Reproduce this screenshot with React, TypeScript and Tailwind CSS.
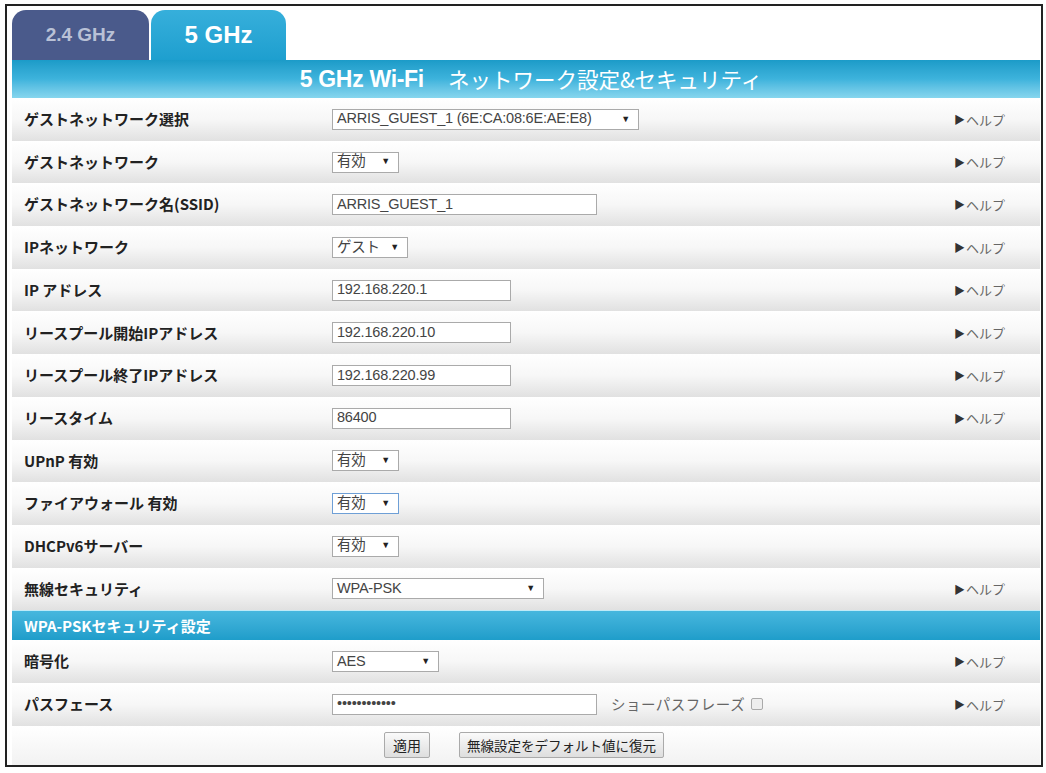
import { ReactNode } from 'react';

const jp = "font-['Noto_Sans_CJK_JP','Noto_Sans',sans-serif]";
const ctl = "font-['Liberation_Sans','Noto_Sans_CJK_JP',sans-serif]";

function Help() {
  return (
    <span className={`flex items-center text-[13px] text-[#666] ${jp}`}>
      <span className="text-[11px] text-[#333] mr-[1px]">▶</span>ヘルプ
    </span>
  );
}

function Select({ value, width, focused }: { value: string; width: number; focused?: boolean }) {
  return (
    <div
      className={`h-[21px] flex items-center justify-between bg-white border ${focused ? 'border-[#6e9fd6]' : 'border-[#aaa]'} pl-[4px] pr-[8px] text-[14.5px] text-[#444] ${ctl} tracking-[-0.2px]`}
      style={{ width }}
    >
      <span className="whitespace-nowrap">{value}</span>
      <span className="text-[9px] text-[#222]">▼</span>
    </div>
  );
}

function Input({ value, width }: { value: string; width: number }) {
  return (
    <div
      className={`h-[21px] flex items-center bg-white border border-[#aaa] px-[4px] text-[14.5px] text-[#444] ${ctl} tracking-[-0.2px]`}
      style={{ width }}
    >
      {value}
    </div>
  );
}

function Row({ label, control, help = true, extra }: { label: string; control: ReactNode; help?: boolean; extra?: ReactNode }) {
  return (
    <div className="h-[42.7px] flex items-center bg-gradient-to-b from-white via-[#f7f7f7] to-[#e1e1e1]">
      <div className={`w-[320px] pl-[12px] font-bold text-[15px] text-[#222] ${jp}`}>{label}</div>
      <div className="flex items-center">{control}</div>
      {extra}
      <div className="ml-auto w-[86px]">{help && <Help />}</div>
    </div>
  );
}

export default function App() {
  return (
    <div className="w-[1046px] h-[773px] bg-white pt-[4px] pl-[5px]">
      <div className="w-[1038px] h-[763px] border-2 border-[#222] pl-[5px] pr-[1px] pt-[4px] flex flex-col">
        {/* tabs */}
        <div className="flex items-end gap-[2px] h-[50px]">
          <div className="w-[137px] h-[50px] rounded-t-[14px] bg-[#4a5a8b] flex items-center justify-center">
            <span className={`text-[19px] font-bold text-[#b9c1d6] ${ctl}`}>2.4 GHz</span>
          </div>
          <div className="w-[135px] h-[50px] rounded-t-[14px] bg-gradient-to-b from-[#36afdb] to-[#1d9fcf] flex items-center justify-center">
            <span className={`text-[24px] font-bold text-white ${ctl}`}>5 GHz</span>
          </div>
        </div>
        {/* title bar */}
        <div className="h-[38px] bg-gradient-to-b from-[#1b9bc8] via-[#3db3dc] to-[#86d6ee] flex items-center justify-center text-white pl-[10px]">
          <span className={`text-[23px] font-bold ${ctl} tracking-[-0.3px]`}>5 GHz Wi-Fi</span>
          <span className={`text-[21.5px] ml-[24px] ${jp}`}>ネットワーク設定&セキュリティ</span>
        </div>

        <Row label="ゲストネットワーク選択" control={<Select value="ARRIS_GUEST_1 (6E:CA:08:6E:AE:E8)" width={307} />} />
        <Row label="ゲストネットワーク" control={<Select value="有効" width={67} />} />
        <Row label="ゲストネットワーク名(SSID)" control={<Input value="ARRIS_GUEST_1" width={265} />} />
        <Row label="IPネットワーク" control={<Select value="ゲスト" width={76} />} />
        <Row label="IP アドレス" control={<Input value="192.168.220.1" width={179} />} />
        <Row label="リースプール開始IPアドレス" control={<Input value="192.168.220.10" width={179} />} />
        <Row label="リースプール終了IPアドレス" control={<Input value="192.168.220.99" width={179} />} />
        <Row label="リースタイム" control={<Input value="86400" width={179} />} />
        <Row label="UPnP 有効" control={<Select value="有効" width={67} />} help={false} />
        <Row label="ファイアウォール 有効" control={<Select value="有効" width={67} focused />} help={false} />
        <Row label="DHCPv6サーバー" control={<Select value="有効" width={67} />} help={false} />
        <Row label="無線セキュリティ" control={<Select value="WPA-PSK" width={212} />} />

        {/* section header */}
        <div className="h-[30px] border-t border-[#bfeaf7] bg-gradient-to-b from-[#46b7de] to-[#1e9dca] flex items-center pl-[12px]">
          <span className={`text-[15px] font-bold text-white ${jp}`}>WPA-PSKセキュリティ設定</span>
        </div>

        <Row label="暗号化" control={<Select value="AES" width={107} />} />
        <Row
          label="パスフェース"
          control={<Input value="••••••••••••" width={265} />}
          extra={
            <span className={`ml-[14px] flex items-center text-[14.5px] text-[#666] tracking-[0.5px] ${jp}`}>
              ショーパスフレーズ
              <span className="ml-[6px] w-[12px] h-[12px] border border-[#aaa] bg-[#eee] rounded-[2px]" />
            </span>
          }
        />

        {/* buttons */}
        <div className="flex-1 flex items-center justify-center gap-[29px] pr-[4px] bg-gradient-to-b from-white to-[#f2f2f2]">
          <button className={`h-[26px] px-[8px] border border-[#aaa] rounded-[2px] bg-gradient-to-b from-[#fafafa] to-[#dedede] text-[14px] text-[#222] ${jp}`}>
            適用
          </button>
          <button className={`h-[26px] px-[7px] border border-[#aaa] rounded-[2px] bg-gradient-to-b from-[#fafafa] to-[#dedede] text-[13.5px] text-[#222] ${jp}`}>
            無線設定をデフォルト値に復元
          </button>
        </div>
      </div>
    </div>
  );
}
